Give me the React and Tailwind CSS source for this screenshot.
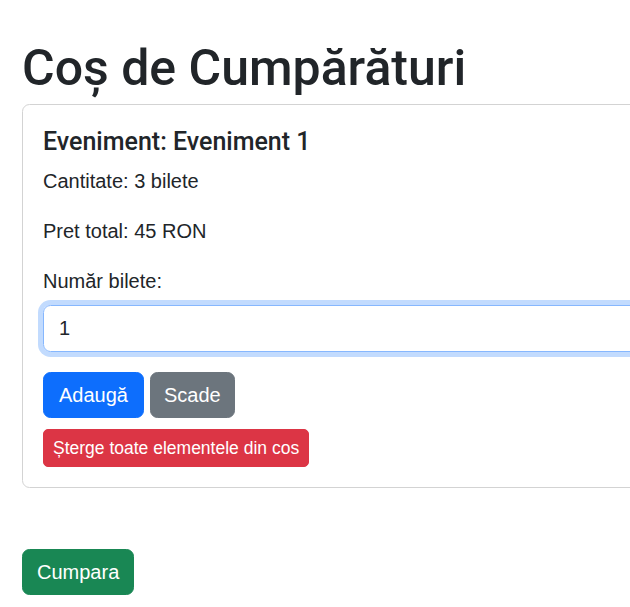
export default function App() {
  return (
    <div
      className="overflow-hidden bg-white text-[#212529] px-[22px] pt-[38px] pb-[13px]"
      style={{ fontFamily: '"Liberation Sans", Arial, sans-serif' }}
    >
      <h1 className="font-['Roboto',sans-serif] text-[50px] leading-[60px] font-medium mb-[6px] whitespace-nowrap">
        Coș de Cumpărături
      </h1>
      <div className="w-[720px] border border-[#d3d3d3] rounded-[7.5px] p-[20px]">
        <h5 className="font-['Roboto',sans-serif] text-[25px] leading-[33px] font-medium mb-[8px]">
          Eveniment: Eveniment 1
        </h5>
        <p className="text-[20px] leading-[30px] mb-[20px]">Cantitate: 3 bilete</p>
        <p className="text-[20px] leading-[30px] mb-[20px]">Pret total: 45 RON</p>
        <label className="block text-[20px] leading-[30px] mb-[9px]">Număr bilete:</label>
        <input
          type="text"
          defaultValue="1"
          className="block w-full h-[47px] px-[15px] text-[20px] text-[#212529] border border-[#86b7fe] rounded-[7.5px] outline-none shadow-[0_0_0_5px_rgba(13,110,253,0.25)]"
          style={{ fontFamily: '"Liberation Sans", Arial, sans-serif' }}
        />
        <div className="flex gap-[6px] mt-[20px]">
          <button className="h-[46px] px-[15px] text-[20px] text-white bg-[#0d6efd] rounded-[7.5px] border border-[#0d6efd]">
            Adaugă
          </button>
          <button className="h-[46px] px-[13px] text-[20px] text-white bg-[#6c757d] rounded-[7.5px] border border-[#6c757d]">
            Scade
          </button>
        </div>
        <button className="mt-[11px] h-[38px] px-[9px] text-[17.5px] text-white bg-[#dc3545] rounded-[5px] border border-[#dc3545]">
          Șterge toate elementele din cos
        </button>
      </div>
      <button className="mt-[61px] h-[46px] px-[14px] text-[20px] text-white bg-[#198754] rounded-[7.5px] border border-[#198754]">
        Cumpara
      </button>
    </div>
  );
}
